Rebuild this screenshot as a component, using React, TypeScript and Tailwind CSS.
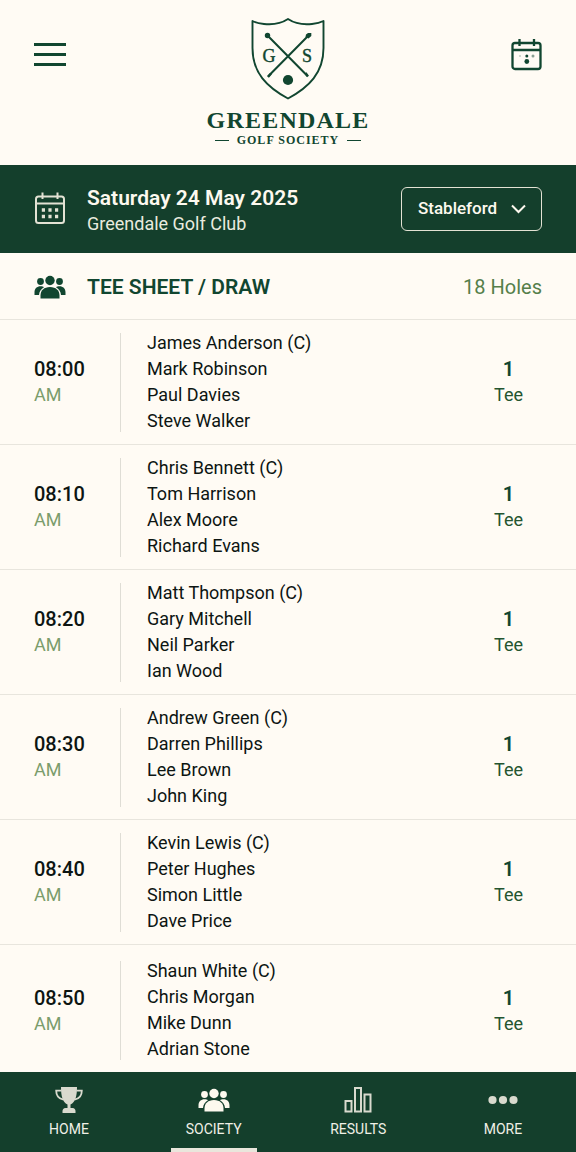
import { useState } from 'react';

type Group = { time: string; players: string[]; tee: number };

const groups: Group[] = [
  { time: '08:00', players: ['James Anderson (C)', 'Mark Robinson', 'Paul Davies', 'Steve Walker'], tee: 1 },
  { time: '08:10', players: ['Chris Bennett (C)', 'Tom Harrison', 'Alex Moore', 'Richard Evans'], tee: 1 },
  { time: '08:20', players: ['Matt Thompson (C)', 'Gary Mitchell', 'Neil Parker', 'Ian Wood'], tee: 1 },
  { time: '08:30', players: ['Andrew Green (C)', 'Darren Phillips', 'Lee Brown', 'John King'], tee: 1 },
  { time: '08:40', players: ['Kevin Lewis (C)', 'Peter Hughes', 'Simon Little', 'Dave Price'], tee: 1 },
  { time: '08:50', players: ['Shaun White (C)', 'Chris Morgan', 'Mike Dunn', 'Adrian Stone'], tee: 1 },
];

function Crest() {
  return (
    <svg width="76" height="84" viewBox="0 0 76 84" fill="none" stroke="currentColor" aria-hidden="true">
      <path
        d="M38 3C32 7 23 9 14 8C9.500 7.500 5.500 6.500 2.500 5V32C2.500 57 17 71 38 82.500C59 71 73.500 57 73.500 32V5C70.500 6.500 66.500 7.500 62 8C53 9 44 7 38 3Z"
        strokeWidth="1.900"
        strokeLinejoin="round"
      />
      <path d="M17.500 19.500L57.500 60M58.500 19.500L18 60.500" strokeWidth="2" />
      <path d="M55.500 57L58 60.500M21 57.500L18 61" strokeWidth="2.400" />
      <circle cx="17.500" cy="19.500" r="2.700" fill="currentColor" stroke="none" />
      <path d="M56 18.500L58 17H61.300V20L58.500 22.500L55.500 21Z" fill="currentColor" stroke="none" />
      <circle cx="38" cy="64" r="5.100" fill="currentColor" stroke="none" />
      <g fill="currentColor" strokeWidth="0.400" textAnchor="middle" className="font-['Liberation_Serif',serif] text-[18px] font-normal">
        <text x="19" y="46">G</text>
        <text x="57" y="46">S</text>
      </g>
    </svg>
  );
}

function HeaderCalendarIcon() {
  return (
    <svg width="32" height="34" viewBox="0 0 32 34" fill="none" stroke="currentColor" strokeWidth="2.300" aria-hidden="true">
      <rect x="2.500" y="6" width="28" height="26" rx="2.500" />
      <path d="M2.500 13H30.500M9.500 2V9M24 2V9" />
      <circle cx="16.800" cy="24.500" r="2.400" fill="currentColor" stroke="none" />
      <circle cx="16.800" cy="19" r="1.500" fill="currentColor" stroke="none" />
      <circle cx="23" cy="19" r="1.500" fill="currentColor" stroke="none" opacity=".5" />
      <circle cx="10" cy="19" r="1.100" fill="currentColor" stroke="none" opacity=".25" />
    </svg>
  );
}

function CalendarIcon() {
  return (
    <svg width="32" height="34" viewBox="0 0 32 34" fill="none" stroke="currentColor" strokeWidth="2" aria-hidden="true">
      <rect x="2" y="4.500" width="28" height="26.500" rx="2.500" />
      <path d="M2 11.500H30M8.500 0.500V7M23.500 0.500V7" />
      <path d="M7.800 18H11M14.400 18H17.600M21 18H24.200M7.800 24.500H11M14.400 24.500H17.600M21 24.500H24.200" strokeWidth="3.600" />
    </svg>
  );
}

function PeopleIcon() {
  return (
    <svg width="32" height="24" viewBox="0 0 32 24" fill="currentColor" aria-hidden="true">
      <circle cx="16" cy="5.500" r="4.700" />
      <circle cx="6.500" cy="6.500" r="3.400" />
      <circle cx="25.500" cy="6.500" r="3.400" />
      <path d="M6.500 23.500V20.500C6.500 15.500 10 12 16 12S25.500 15.500 25.500 20.500V23.500Z" />
      <path d="M0.500 20V17.500C0.500 13.500 3 11.300 6.500 11.300C8 11.300 9.200 11.700 10 12.200C7 13.800 5.300 16.500 5 20Z" />
      <path d="M31.500 20V17.500C31.500 13.500 29 11.300 25.500 11.300C24 11.300 22.800 11.700 22 12.200C25 13.800 26.700 16.500 27 20Z" />
    </svg>
  );
}

function TrophyIcon() {
  return (
    <svg width="28" height="28" viewBox="0 0 28 28" fill="currentColor" aria-hidden="true">
      <path d="M6 1H22C22 10 20.500 16 15.500 18.500V22H17.500C19.500 22 20.500 23.500 20.500 25V27H7.500V25C7.500 23.500 8.500 22 10.500 22H12.500V18.500C7.500 16 6 10 6 1Z" />
      <path d="M6.500 4.700H1.200C1.200 9.500 3.500 12.700 8.500 13.700M21.500 4.700H26.800C26.800 9.500 24.500 12.700 19.500 13.700" fill="none" stroke="currentColor" strokeWidth="1.800" />
    </svg>
  );
}

function BarsIcon() {
  return (
    <svg width="28" height="28" viewBox="0 0 28 28" fill="none" stroke="currentColor" strokeWidth="2" aria-hidden="true">
      <rect x="1.500" y="15" width="6" height="10.500" />
      <rect x="11" y="2" width="6" height="23.500" />
      <rect x="20.500" y="8.500" width="6" height="17" />
    </svg>
  );
}

function DotsIcon() {
  return (
    <svg width="30" height="28" viewBox="0 0 30 28" fill="currentColor" aria-hidden="true">
      <circle cx="4.500" cy="14" r="4.100" />
      <circle cx="15" cy="14" r="4.100" />
      <circle cx="25.500" cy="14" r="4.100" />
    </svg>
  );
}

const tabs = [
  { label: 'HOME', Icon: TrophyIcon },
  { label: 'SOCIETY', Icon: PeopleIcon },
  { label: 'RESULTS', Icon: BarsIcon },
  { label: 'MORE', Icon: DotsIcon },
];

export default function App() {
  const [format, setFormat] = useState('Stableford');
  const [active, setActive] = useState('SOCIETY');

  return (
    <div className="flex min-h-screen flex-col bg-[#fffbf4] font-[Roboto,sans-serif] text-[#0d1512]">
      <header className="flex items-start justify-between px-[34px] pt-4 pb-[17px] text-[#114630]">
        <button type="button" aria-label="Menu" className="mt-[27px] flex w-8 flex-col gap-[7px]">
          <span className="h-[3px] w-full bg-current" />
          <span className="h-[3px] w-full bg-current" />
          <span className="h-[3px] w-full bg-current" />
        </button>
        <div className="flex flex-col items-center font-['Liberation_Serif',serif] font-bold">
          <Crest />
          <h1 className="mt-2 text-2xl leading-6 tracking-wider">GREENDALE</h1>
          <p className="flex items-center gap-2 text-xs leading-4 tracking-[1px]">
            <span className="h-px w-[14px] bg-current" />
            GOLF SOCIETY
            <span className="h-px w-[14px] bg-current" />
          </p>
        </div>
        <button type="button" aria-label="Calendar" className="mt-[21px]">
          <HeaderCalendarIcon />
        </button>
      </header>

      <section className="flex items-center bg-[#143f2c] px-[34px] py-[15px] text-[#fdf9ef]">
        <span className="text-[#e3e2d4]">
          <CalendarIcon />
        </span>
        <div className="ml-[21px] flex-1 pt-[6px]">
          <h2 className="text-[21px] leading-6 font-semibold">Saturday 24 May 2025</h2>
          <p className="text-lg leading-7 text-[#e9ebdf]">Greendale Golf Club</p>
        </div>
        <div className="relative">
          <select
            aria-label="Format"
            value={format}
            onChange={(e) => setFormat(e.target.value)}
            className="h-11 w-[141px] appearance-none rounded-md border border-[#e3e2d4] bg-transparent pl-4 text-[17px] font-medium"
          >
            <option>Stableford</option>
          </select>
          <svg className="pointer-events-none absolute top-[17px] right-4" width="15" height="10" viewBox="0 0 15 10" fill="none" stroke="currentColor" strokeWidth="2" aria-hidden="true">
            <path d="M1 1.500L7.500 8L14 1.500" />
          </svg>
        </div>
      </section>

      <main className="flex-1">
        <div className="flex items-center border-b border-[#e8e5dd] px-[34px] pt-5 pb-[18px]">
          <span className="text-[#114630]">
            <PeopleIcon />
          </span>
          <h2 className="ml-[21px] flex-1 text-[21px] leading-7 font-semibold text-[#114630]">TEE SHEET / DRAW</h2>
          <p className="text-xl leading-7 text-[#557f4a]">18 Holes</p>
        </div>

        <table className="w-full border-collapse" aria-label="Tee sheet">
          <tbody>
            {groups.map((group) => (
              <tr key={group.time} className="group border-b border-[#e8e5dd] last:border-b-0">
                <th scope="row" className="w-[120px] pl-[34px] text-left align-middle font-normal group-last:pt-1">
                  <span className="block text-xl leading-[26px] font-medium">{group.time}</span>
                  <span className="block text-lg leading-[26px] text-[#7b9d6c]">AM</span>
                </th>
                <td className="py-[10px] group-last:pt-[13px]">
                  <div className="flex items-center">
                    <span className="h-[99px] w-px bg-[#dfddd5]" />
                    <ul className="pl-[26px] text-lg leading-[26px]">
                      {group.players.map((player) => (
                        <li key={player}>{player}</li>
                      ))}
                    </ul>
                  </div>
                </td>
                <td className="w-[135px] text-center align-middle group-last:pt-1">
                  <span className="block text-xl leading-[26px] font-semibold text-[#114630]">{group.tee}</span>
                  <span className="block text-lg leading-[26px] text-[#24542f]">Tee</span>
                </td>
              </tr>
            ))}
          </tbody>
        </table>
      </main>

      <nav className="flex justify-between bg-[#143f2c] pr-[30px] pl-[26px]">
        {tabs.map(({ label, Icon }) => (
          <button
            key={label}
            type="button"
            onClick={() => setActive(label)}
            aria-current={active === label ? 'page' : undefined}
            className={
              active === label
                ? 'flex h-20 w-[86px] flex-col items-center border-b-4 border-[#e9e6dc] pt-[14px] text-[#fdf9ef]'
                : 'flex h-20 w-[86px] flex-col items-center border-b-4 border-transparent pt-[14px] text-[#d9dace]'
            }
          >
            <span className="flex h-7 items-center">
              <Icon />
            </span>
            <span className="mt-[5px] text-sm leading-5 text-[#f0f0e6]">{label}</span>
          </button>
        ))}
      </nav>
    </div>
  );
}
